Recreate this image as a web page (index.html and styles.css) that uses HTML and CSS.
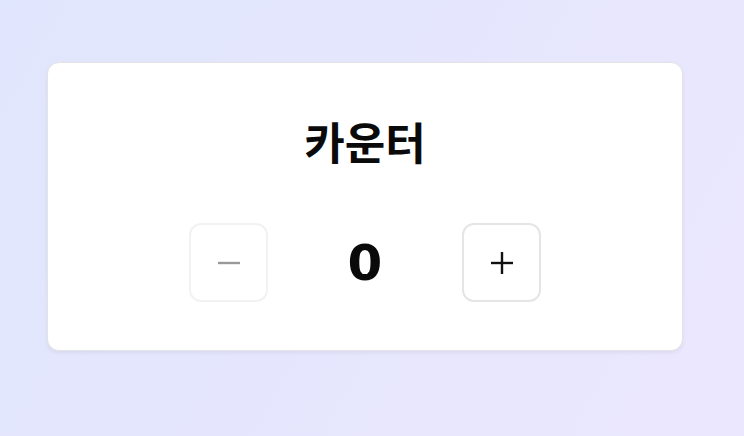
FILE: index.html
```html
<!DOCTYPE html>
<html lang="ko">
<head>
<meta charset="utf-8">
<link rel="stylesheet" href="styles.css">
</head>
<body>
<main class="page">
  <section class="card">
    <h1 class="title">카운터</h1>
    <div class="controls">
      <button class="btn btn-disabled" disabled aria-label="감소">
        <svg width="24" height="24" viewBox="0 0 24 24"><line x1="1" y1="12" x2="23" y2="12" stroke="#999" stroke-width="2.4"/></svg>
      </button>
      <div class="value">0</div>
      <button class="btn" aria-label="증가">
        <svg width="24" height="24" viewBox="0 0 24 24"><line x1="1" y1="12" x2="23" y2="12" stroke="#111" stroke-width="2.4"/><line x1="12" y1="1" x2="12" y2="23" stroke="#111" stroke-width="2.4"/></svg>
      </button>
    </div>
  </section>
</main>
</body>
</html>
```
FILE: styles.css
```css
html, body {
  margin: 0;
  height: 100%;
}
body {
  background: linear-gradient(120deg, #e0e6fd 0%, #ebe7fe 100%);
  font-family: "Noto Sans CJK KR", "Noto Sans", sans-serif;
  color: #0a0a0a;
}
.page {
  padding: 62px 61px 0 47px;
}
.card {
  box-sizing: border-box;
  height: 289px;
  background: #fff;
  border: 1px solid #e4e4e7;
  border-radius: 12px;
  box-shadow: 0 2px 4px rgba(0,0,0,0.06);
  padding: 48px;
  display: flex;
  flex-direction: column;
  align-items: center;
}
.title {
  margin: 0;
  font-size: 44px;
  font-weight: 700;
  line-height: 60px;
}
.controls {
  margin-top: 52px;
  display: flex;
  align-items: center;
  gap: 32px;
}
.btn {
  box-sizing: border-box;
  width: 79px;
  height: 79px;
  border: 2px solid #e5e5e5;
  border-radius: 12px;
  background: #fff;
  display: flex;
  align-items: center;
  justify-content: center;
  padding: 0;
}
.btn-disabled {
  border-color: #f2f2f2;
}
.value {
  width: 130px;
  text-align: center;
  font-family: "DejaVu Sans", sans-serif;
  font-size: 50px;
  font-weight: 700;
  line-height: 1;
}
```
